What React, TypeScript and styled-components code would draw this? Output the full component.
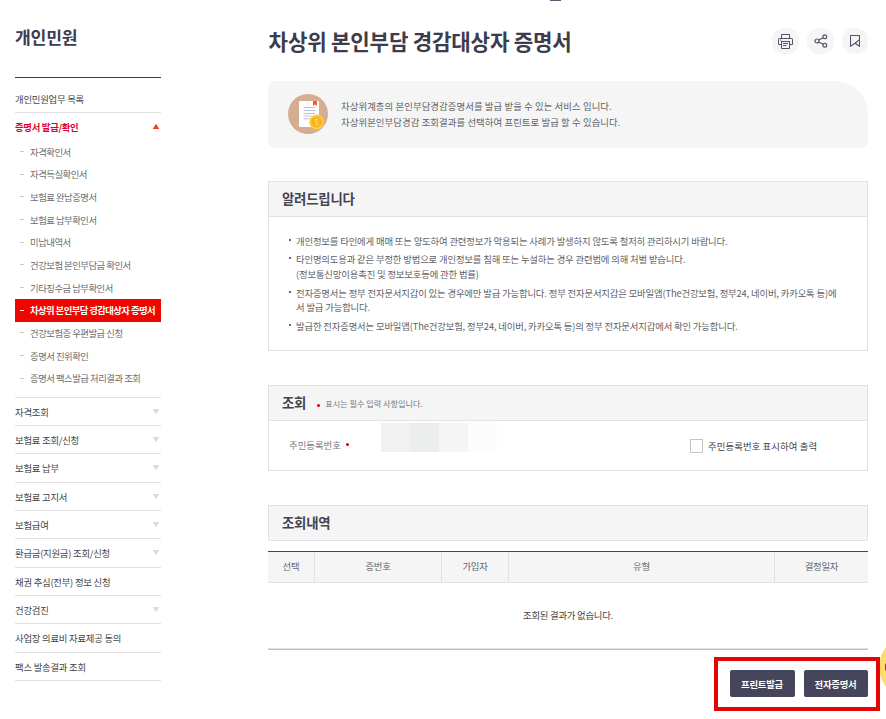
import React from "react";
import styled, { createGlobalStyle, css } from "styled-components";

const GlobalStyle = createGlobalStyle`
  *, *::before, *::after { box-sizing: border-box; }
  html, body { margin: 0; padding: 0; background: #fff; overflow: hidden; }
  body { font-family: "Noto Sans CJK KR", sans-serif; font-size: 9.4px; letter-spacing: -0.24px; color: #555; }
  h1, h2, p, ul { margin: 0; padding: 0; }
  ul { list-style: none; }
  button { font: inherit; letter-spacing: inherit; }
`;

const Page = styled.div`
  position: relative;
  width: 886px;
  height: 719px;
  overflow: hidden;
  display: grid;
  grid-template-columns: 146px 600px;
  column-gap: 107px;
  padding-left: 15px;
  align-items: start;
`;

const HeaderTick = styled.div`
  position: absolute;
  left: 550px;
  top: 0;
  width: 11px;
  height: 1px;
  background: #5c5b70;
`;

const Sidebar = styled.nav`
  display: flex;
  flex-direction: column;
`;

const SideTitle = styled.h2`
  height: 78px;
  padding-top: 24px;
  border-bottom: 1px solid #3d3c4e;
  font-size: 17.2px;
  line-height: 26px;
  font-weight: 700;
  letter-spacing: -0.2px;
  color: #3d3c4e;
`;

const MenuRow = styled.div<{ $first?: boolean; $active?: boolean }>`
  display: flex;
  justify-content: space-between;
  height: 28.32px;
  padding-right: 2px;
  line-height: 28px;
  color: #444;
  border-bottom: 1px solid #e1e1e4;
  ${(p) => p.$first && css`height: 35px; padding-top: 7px;`}
  ${(p) => p.$active && css`height: 27.6px; border-bottom: 0; font-weight: 700; color: #e0002f; letter-spacing: -0.3px;`}
`;

const Arrow = styled.svg`
  width: 6px;
  height: 5px;
  margin-top: 11px;
`;

const SubMenu = styled.ul`
  height: 257.2px;
  border-bottom: 1px solid #e1e1e4;
`;

const SubItem = styled.li<{ $active?: boolean }>`
  display: flex;
  height: 22.66px;
  padding-left: 5px;
  line-height: 23px;
  letter-spacing: -0.5px;
  white-space: nowrap;
  color: #6c6c72;
  &::before {
    content: "";
    width: 4px;
    height: 1px;
    margin: 10.4px 6px 0 0;
    background: #c8c8c8;
  }
  ${(p) => p.$active && css`
    background: #f00500;
    color: #fff;
    font-weight: 700;
    letter-spacing: -0.6px;
    &::before { background: #fff; }
  `}
`;

const Main = styled.main`
  display: flex;
  flex-direction: column;
`;

const TitleBar = styled.header`
  display: flex;
  justify-content: space-between;
  height: 81px;
  padding-top: 28px;
`;

const PageTitle = styled.h1`
  padding-left: 0.6px;
  font-size: 21.2px;
  line-height: 26px;
  font-weight: 700;
  letter-spacing: -0.21px;
  color: #3d3c4a;
  white-space: nowrap;
`;

const Tools = styled.div`
  display: flex;
  gap: 8px;
`;

const RoundButton = styled.button<{ $width?: number }>`
  display: grid;
  place-items: center;
  width: ${(p) => p.$width ?? 27}px;
  height: 26px;
  padding: 0;
  border: 0;
  border-radius: 12px;
  background: #f5f5f5;
  color: #55546b;
`;

const Banner = styled.section`
  display: flex;
  align-items: center;
  height: 67px;
  padding: 0 0 1px 20px;
  gap: 13px;
  border-radius: 7px 33px 7px 7px;
  background: #f5f5f5;
  line-height: 16px;
  letter-spacing: 0.09px;
  color: #5f5f66;
  p { margin-top: -1px; }
`;

const Panel = styled.section<{ $gap: number }>`
  margin-top: ${(p) => p.$gap}px;
  border: 1px solid #e1e1e6;
`;

const PanelHead = styled.div<{ $bare?: boolean }>`
  display: flex;
  height: ${(p) => (p.$bare ? 34 : 35)}px;
  padding-left: 13px;
  border-bottom: ${(p) => (p.$bare ? 0 : 1)}px solid #e1e1e6;
  background: #f5f5f5;
  line-height: 34px;
`;

const PanelTitle = styled.h2`
  font-size: 13.4px;
  line-height: 32px;
  font-weight: 700;
  letter-spacing: -0.2px;
  color: #44434f;
`;

const RequiredDot = styled.i<{ $left: number; $top: number }>`
  width: 3px;
  height: 3px;
  border-radius: 50%;
  margin: ${(p) => p.$top}px 0 0 ${(p) => p.$left}px;
  background: #e60000;
`;

const HeadNote = styled.span`
  margin-left: 5px;
  padding-top: 1px;
  font-size: 8.1px;
  letter-spacing: 0.03px;
  color: #77777c;
`;

const NoticeList = styled.ul`
  display: flex;
  flex-direction: column;
  gap: 3.9px;
  height: 133px;
  padding: 16.8px 26px 0 20px;
  line-height: 14.7px;
  letter-spacing: -0.17px;
  color: #5f5f66;
`;

const NoticeItem = styled.li`
  display: flex;
  white-space: pre;
  &::before {
    content: "";
    flex: none;
    width: 2px;
    height: 2px;
    margin: 5px 5px 0 0;
    background: #66667a;
  }
`;

const FormRow = styled.div`
  display: grid;
  grid-template-columns: 92px 309px auto;
  height: 49px;
  padding-left: 20px;
  line-height: 49px;
  letter-spacing: 0;
  color: #77777c;
`;

const FieldLabel = styled.div`
  display: flex;
`;

const MaskedValue = styled.div`
  display: flex;
  height: 29px;
  margin-top: 2px;
`;

const MaskBlock = styled.span<{ $tone: string }>`
  width: 29px;
  background: ${(p) => p.$tone};
`;

const CheckLabel = styled.label`
  display: flex;
  gap: 5px;
  padding-top: 1px;
  letter-spacing: 0.1px;
  color: #444;
`;

const CheckBox = styled.input`
  appearance: none;
  width: 13px;
  height: 14px;
  margin: 17px 0 0;
  border: 1px solid #c4c4c4;
  background: #fff;
`;

const Table = styled.table`
  width: 600px;
  margin-top: 10px;
  table-layout: fixed;
  border-collapse: separate;
  border-spacing: 0;
  border-top: 1px solid #44445a;
  border-bottom: 1px solid #bdbfca;
`;

const HeadCell = styled.th<{ $width: number }>`
  width: ${(p) => p.$width}px;
  height: 31px;
  padding: 0 0 2px;
  border-bottom: 1px solid #e1e1e6;
  border-right: 1px solid #e1e1e6;
  background: #f5f5f5;
  font-weight: 400;
  line-height: 28px;
  color: #66666c;
  &:last-child { border-right: 0; }
`;

const EmptyCell = styled.td`
  height: 66px;
  padding: 0 0 2px;
  border-bottom: 1px solid #e1e1e6;
  text-align: center;
  color: #444;
`;

const Actions = styled.div`
  display: flex;
  justify-content: flex-end;
  gap: 9px;
  margin-top: 20px;
`;

const ActionButton = styled.button<{ $width: number }>`
  width: ${(p) => p.$width}px;
  height: 27px;
  padding: 0 1px 0 0;
  border: 0;
  border-radius: 2px;
  background: #45455b;
  color: #fff;
  font-weight: 700;
  line-height: 26px;
`;

const Highlight = styled.div`
  position: absolute;
  left: 714px;
  top: 657px;
  width: 166px;
  height: 54px;
  border: 4px solid #e60505;
  pointer-events: none;
`;

const ChatBubble = styled.div`
  position: absolute;
  left: 879px;
  top: 636px;
  width: 62px;
  height: 62px;
  border-radius: 50%;
  background: #ffdc69;
  &::after {
    content: "";
    position: absolute;
    left: 6px;
    top: 27px;
    width: 4px;
    height: 8px;
    border-radius: 2px;
    background: #8a3a4a;
  }
`;

const submenu = [
  "자격확인서", "자격득실확인서", "보험료 완납증명서", "보험료 납부확인서", "미납내역서",
  "건강보험 본인부담금 확인서", "기타징수금 납부확인서", "차상위 본인부담 경감대상자 증명서",
  "건강보험증 우편발급 신청", "증명서 진위확인", "증명서 팩스발급 처리결과 조회",
];

const menu: [string, boolean][] = [
  ["자격조회", true], ["보험료 조회/신청", true], ["보험료 납부", true], ["보험료 고지서", true],
  ["보험급여", true], ["환급금(지원금) 조회/신청", true], ["채권 추심(전부) 정보 신청", false],
  ["건강검진", true], ["사업장 의료비 자료제공 동의", false], ["팩스 발송결과 조회", false],
];

const notices = [
  "개인정보를 타인에게 매매 또는 양도하여 관련정보가 악용되는 사례가 발생하지 않도록 철저히 관리하시기 바랍니다.",
  "타인명의도용과 같은 부정한 방법으로 개인정보를 침해 또는 누설하는 경우 관련법에 의해 처벌 받습니다.\n(정보통신망이용촉진 및 정보보호등에 관한 법률)",
  "전자증명서는 정부 전자문서지갑이 있는 경우에만 발급 가능합니다. 정부 전자문서지갑은 모바일앱(The건강보험, 정부24, 네이버, 카카오톡 등)에\n서 발급 가능합니다.",
  "발급한 전자증명서는 모바일앱(The건강보험, 정부24, 네이버, 카카오톡 등)의 정부 전자문서지갑에서 확인 가능합니다.",
];

const columns: [string, number][] = [["선택", 47], ["증번호", 127], ["가입자", 67], ["유형", 266], ["결정일자", 93]];

const PrintIcon = () => (
  <svg width="15" height="15" viewBox="0 0 15 15" fill="none" stroke="currentColor">
    <path d="M3.5 4V.5h8V4M3 10.5H.5V5.2q0-.7.7-.7h12.6q.7 0 .7.7v5.3H12M3 7.5h9M3.5 7.5v7h8v-7M5 9.5h5M5 11.5h3.5M2.2 6h1.2" />
  </svg>
);

const ShareIcon = () => (
  <svg width="14" height="14" viewBox="0 0 14 14" fill="none" stroke="currentColor" strokeWidth="1.2">
    <circle cx="3" cy="7" r="2" />
    <circle cx="10.8" cy="2.8" r="1.9" />
    <circle cx="10.8" cy="11.2" r="1.9" />
    <path d="M4.8 6.1l4.3-2.4M4.8 7.9l4.3 2.4" />
  </svg>
);

const BookmarkIcon = () => (
  <svg width="10" height="12" viewBox="0 0 10 12" fill="none" stroke="currentColor" strokeWidth="1.1">
    <path d="M.5.5h9v10.8L5 8.2.5 11.3zM5 8.2l4.5-3.4" />
  </svg>
);

const CertificateIcon = () => (
  <svg width="40" height="40" viewBox="0 0 40 40">
    <circle cx="20" cy="20" r="20" fill="#d5ae91" />
    <path d="M12 7h18q1 0 1 1v25H12q-1 0-1-1V8q0-1 1-1z" fill="#fff" />
    <path d="M25 7h4v5l-2-1.6-2 1.6z" fill="#ff5a2b" />
    <path d="M15.5 13.5h11.5M15.5 16.5h11.5M15.5 19.5h11.5M15.5 22h8M15.5 24.7h6" stroke="#b9bfdc" strokeWidth="1.1" />
    <circle cx="28.6" cy="28" r="7.4" fill="#ffcf33" />
    <circle cx="28.6" cy="28" r="5.4" fill="#ffac26" />
    <path d="M30.6 26.3q-.6-1.1-2-1.1-1.8 0-1.8 1.4 0 1.2 1.9 1.4 1.9.3 1.9 1.5 0 1.4-1.9 1.4-1.6 0-2.1-1.2M28.6 24.2v7.6" fill="none" stroke="#ffdc4d" strokeWidth="1" />
  </svg>
);

export default function App() {
  return (
    <>
      <GlobalStyle />
      <Page>
        <HeaderTick />
        <Sidebar>
          <SideTitle>개인민원</SideTitle>
          <MenuRow $first>개인민원업무 목록</MenuRow>
          <MenuRow $active>
            증명서 발급/확인
            <Arrow viewBox="0 0 6 5" overflow="visible"><path d="M3-.3 6.3 5H-.3z" fill="#ff3b1f" /></Arrow>
          </MenuRow>
          <SubMenu>
            {submenu.map((label, i) => <SubItem key={label} $active={i === 7}>{label}</SubItem>)}
          </SubMenu>
          {menu.map(([label, expandable]) => (
            <MenuRow key={label}>
              {label}
              {expandable && <Arrow viewBox="0 0 6 5" overflow="visible"><path d="M-.3 0h6.6L3 5.3z" fill="#dcdcdc" /></Arrow>}
            </MenuRow>
          ))}
        </Sidebar>
        <Main>
          <TitleBar>
            <PageTitle>차상위 본인부담 경감대상자 증명서</PageTitle>
            <Tools>
              <RoundButton aria-label="인쇄"><PrintIcon /></RoundButton>
              <RoundButton aria-label="공유"><ShareIcon /></RoundButton>
              <RoundButton $width={26} aria-label="북마크"><BookmarkIcon /></RoundButton>
            </Tools>
          </TitleBar>
          <Banner>
            <CertificateIcon />
            <p>
              차상위계층의 본인부담경감증명서를 발급 받을 수 있는 서비스 입니다.<br />
              차상위본인부담경감 조회결과를 선택하여 프린트로 발급 할 수 있습니다.
            </p>
          </Banner>
          <Panel $gap={33}>
            <PanelHead><PanelTitle>알려드립니다</PanelTitle></PanelHead>
            <NoticeList>
              {notices.map((text) => <NoticeItem key={text}>{text}</NoticeItem>)}
            </NoticeList>
          </Panel>
          <Panel $gap={34}>
            <PanelHead>
              <PanelTitle>조회</PanelTitle>
              <RequiredDot $left={11} $top={18} />
              <HeadNote>표시는 필수 입력 사항입니다.</HeadNote>
            </PanelHead>
            <FormRow>
              <FieldLabel>주민등록번호<RequiredDot $left={5} $top={22} /></FieldLabel>
              <MaskedValue>
                <MaskBlock $tone="#f1f1f1" />
                <MaskBlock $tone="#eceeed" />
                <MaskBlock $tone="#f5f5f5" />
                <MaskBlock $tone="#fcfcfc" />
              </MaskedValue>
              <CheckLabel><CheckBox type="checkbox" />주민등록번호 표시하여 출력</CheckLabel>
            </FormRow>
          </Panel>
          <Panel $gap={34}>
            <PanelHead $bare><PanelTitle>조회내역</PanelTitle></PanelHead>
          </Panel>
          <Table>
            <thead>
              <tr>{columns.map(([label, width]) => <HeadCell key={label} $width={width}>{label}</HeadCell>)}</tr>
            </thead>
            <tbody>
              <tr><EmptyCell colSpan={5}>조회된 결과가 없습니다.</EmptyCell></tr>
            </tbody>
          </Table>
          <Actions>
            <ActionButton $width={65}>프린트발급</ActionButton>
            <ActionButton $width={64}>전자증명서</ActionButton>
          </Actions>
        </Main>
        <ChatBubble />
        <Highlight />
      </Page>
    </>
  );
}
